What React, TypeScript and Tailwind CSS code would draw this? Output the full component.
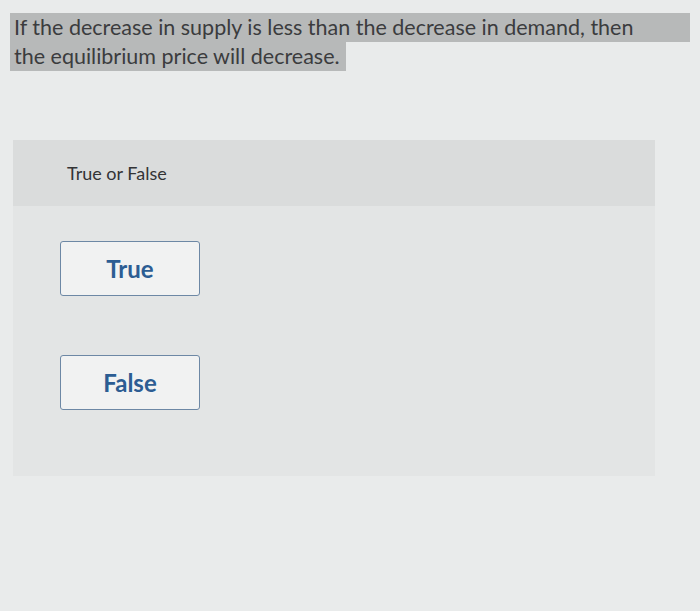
const QUESTION_LINE_1 = "If the decrease in supply is less than the decrease in demand, then";
const QUESTION_LINE_2 = "the equilibrium price will decrease.";

function ChoiceButton({ label }: { label: string }) {
  return (
    <button
      type="button"
      className="flex h-[55px] w-[140px] items-center justify-center rounded-[3px] border-[1.5px] border-[#6d88a5] bg-[#f1f2f2] text-[24px] font-bold text-[#2c5d93]"
    >
      {label}
    </button>
  );
}

export default function App() {
  return (
    <div
      className="flex h-[611px] w-[700px] flex-col bg-[#e9ebeb] pt-[13px] text-[#3b3c3e]"
      style={{ fontFamily: "Lato, 'Open Sans', sans-serif" }}
    >
      {/* selected question text */}
      <div className="ml-[10px] w-[680px] text-[21.5px] leading-[29px]">
        <div className="bg-[#b7b9b9] pl-[4px]">{QUESTION_LINE_1}</div>
        <div className="w-fit bg-[#b7b9b9] pl-[4px] pr-[6px]">{QUESTION_LINE_2}</div>
      </div>

      {/* answer card */}
      <div className="ml-[13px] mt-[69px] flex h-[336px] w-[642px] flex-col bg-[#e3e5e5]">
        <div className="flex h-[66px] items-center bg-[#dadcdc] pl-[54px] text-[18px] text-[#333436]">
          True or False
        </div>
        <div className="flex flex-col gap-[59px] pl-[47px] pt-[35px]">
          <ChoiceButton label="True" />
          <ChoiceButton label="False" />
        </div>
      </div>
    </div>
  );
}
